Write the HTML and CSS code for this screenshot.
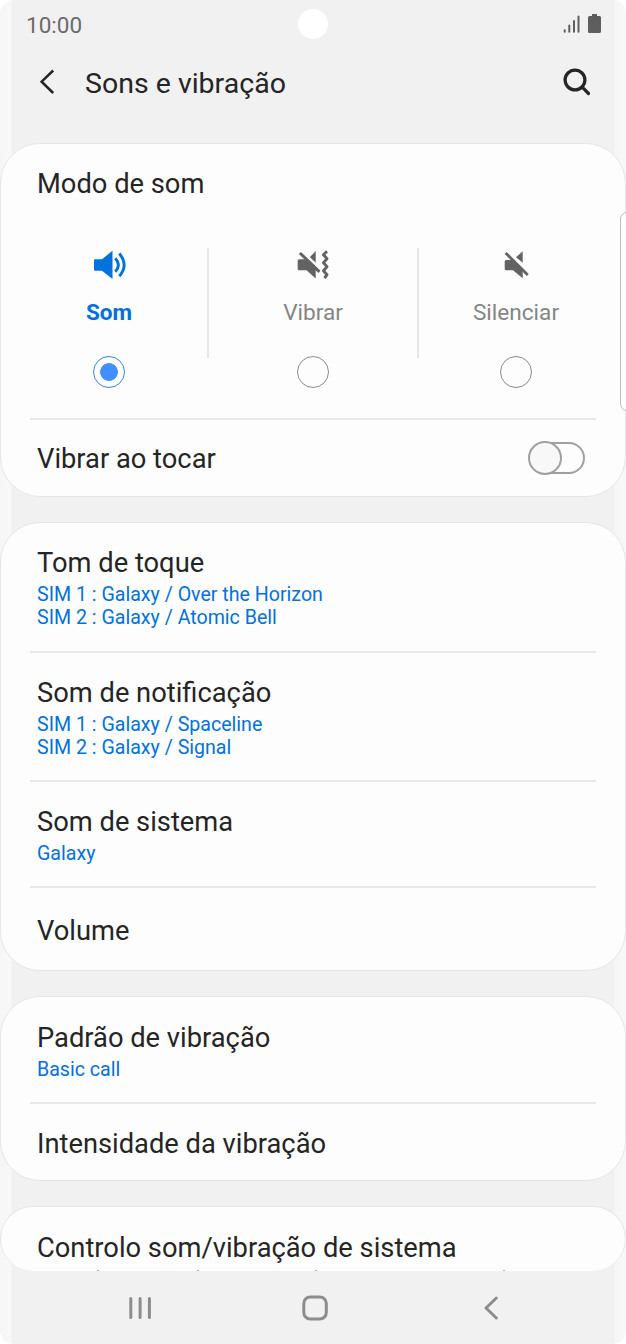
FILE: index.html
```html
<!DOCTYPE html>
<html lang="pt">
<head>
  <meta charset="utf-8">
  <title>Sons e vibração</title>
  <link rel="stylesheet" href="styles.css">
</head>
<body>
<div class="phone">
  <div class="status-bar">
    <span class="time">10:00</span>
    <span class="camera"></span>
    <svg class="status-icons" width="38" height="20" viewBox="0 0 38 20">
      <g stroke="#5e5e5e" stroke-width="2" stroke-linecap="round">
        <path d="M1.700 16.300v1.400M6.300 11.500v6.200M11 7v10.700M15.500 2.600v15.100"/>
      </g>
      <path d="M29 0h5v2h2.500q1.500 0 1.500 1.500v14q0 1.500-1.500 1.500h-10q-1.500 0-1.500-1.500v-14q0-1.500 1.500-1.500h2.500z" fill="#5e5e5e"/>
    </svg>
  </div>

  <div class="header">
    <svg class="back" width="16" height="26" viewBox="0 0 16 26" fill="none" stroke="#252525" stroke-width="2.500"><path d="M14.200 1.500L2.600 12.700L14.200 24"/></svg>
    <h1>Sons e vibração</h1>
    <svg width="28" height="28" viewBox="0 0 28 28" fill="none" stroke="#252525" stroke-width="3.200" stroke-linecap="round"><circle cx="12" cy="12" r="9.900"/><path d="M19.200 19.200L25.500 25.500"/></svg>
  </div>

  <div class="content">
    <section class="card card-sound">
      <h2>Modo de som</h2>
      <div class="modes">
        <div class="mode active">
          <svg width="34" height="30" viewBox="0 0 34 30" fill="#0072de"><path d="M3 9.300H10L20.500 0.700V29L10 20.700H3Q2 20.700 2 19.700V10.300Q2 9.300 3 9.300Z"/><path d="M23.300 8.300Q29.500 15 23.300 21.700M27.300 3.500Q37 15 27.300 26.200" fill="none" stroke="#0072de" stroke-width="2.900"/></svg>
          <span class="label">Som</span>
          <span class="radio"></span>
        </div>
        <div class="mode">
          <svg width="34" height="30" viewBox="0 0 34 30" fill="#636363"><path d="M13.800 7.300L19.700 1V12.500ZM3.200 9.300H9L19.700 19V28.500L10.500 20.300H3.200Q1.700 20.300 1.700 18.800V10.800Q1.700 9.300 3.200 9.300Z"/><path d="M3.900 3L23.500 21.900" fill="none" stroke="#636363" stroke-width="3"/><path d="M31 1.500L27.500 5L31 9L27.500 13L31 17L27.500 21L31 25L28.500 28.500" transform="translate(0 -.3)" fill="none" stroke="#636363" stroke-width="2.900" stroke-linejoin="round"/></svg>
          <span class="label">Vibrar</span>
          <span class="radio"></span>
        </div>
        <div class="mode">
          <svg width="26" height="30" viewBox="0 0 26 30" fill="#636363"><path d="M13 7.300L19.700 1.200V12.700ZM3.200 10H9L19.700 20V28.300L10 20.300H3.200Q1.700 20.300 1.700 18.800V11.500Q1.700 10 3.200 10Z"/><path d="M2.600 2.900L24.800 25" fill="none" stroke="#636363" stroke-width="2.800"/></svg>
          <span class="label">Silenciar</span>
          <span class="radio"></span>
        </div>
      </div>
      <div class="row-switch">
        <h2>Vibrar ao tocar</h2>
        <span class="switch"><span class="thumb"></span></span>
      </div>
    </section>

    <section class="card card-tones">
      <div class="row">
        <h2>Tom de toque</h2>
        <p>SIM 1 : Galaxy / Over the Horizon<br>SIM 2 : Galaxy / Atomic Bell</p>
      </div>
      <div class="row">
        <h2>Som de notificação</h2>
        <p>SIM 1 : Galaxy / Spaceline<br>SIM 2 : Galaxy / Signal</p>
      </div>
      <div class="row">
        <h2>Som de sistema</h2>
        <p>Galaxy</p>
      </div>
      <div class="row row-single">
        <h2>Volume</h2>
      </div>
    </section>

    <section class="card card-vibration">
      <div class="row">
        <h2>Padrão de vibração</h2>
        <p>Basic call</p>
      </div>
      <div class="row row-single">
        <h2>Intensidade da vibração</h2>
      </div>
    </section>

    <section class="card card-system">
      <h2>Controlo som/vibração de sistema</h2>
      <!-- tops of the line that scrolls under the nav bar -->
      <svg class="cut-line" width="626" height="1" viewBox="0 0 626 1" fill="#b0b0b0"><path d="M97 0h2v1h-2zM197 0h2v1h-2zM315 0h2v1h-2zM503 0h2v1h-2z"/></svg>
    </section>
  </div>

  <div class="nav-bar">
    <svg width="24" height="24" viewBox="0 0 24 24" stroke="#8c8c8c" stroke-width="3" stroke-linecap="round"><path d="M2.800 2.500v19M12.100 2.500v19M21.400 2.500v19"/></svg>
    <svg class="home" width="26" height="26" viewBox="0 0 26 26" fill="none" stroke="#8c8c8c" stroke-width="3"><rect x="1.800" y="2" width="22.500" height="22" rx="6.500"/></svg>
    <svg width="16" height="26" viewBox="0 0 16 26" fill="none" stroke="#8c8c8c" stroke-width="3" stroke-linecap="round" stroke-linejoin="round"><path d="M13.300 3L3 13L13.300 23"/></svg>
  </div>

  <div class="edge-handle"></div>
</div>
</body>
</html>
```
FILE: styles.css
```css
body {
  margin: 0;
  background: #fff;
  font-family: Roboto, sans-serif;
  color: #252525;
}
.phone {
  position: relative;
  width: 626px;
  height: 1344px;
  overflow: hidden;
  border-radius: 14px;
  background: linear-gradient(to right, #f6f6f6 0, #f8f8f8 11px, #f1f1f1 12px, #f1f1f1 614px, #f6f6f6 615px, #f8f8f8 100%);
}
h1, h2, p {
  margin: 0;
  font-weight: 400;
}
h1 {
  flex: 1;
  padding-top: 3px;
  font-size: 28.5px;
  line-height: 34px;
}
h2 {
  font-size: 27.3px;
  line-height: 32px;
}
p {
  margin-top: 4px;
  font-size: 19.6px;
  line-height: 23px;
  color: #0072de;
}
svg {
  display: block;
}

.status-bar {
  display: grid;
  grid-template-columns: 1fr 30px 1fr;
  align-items: center;
  height: 48px;
  padding: 0 25px 0 26px;
}
.time {
  padding-top: 2px;
  font-size: 22.5px;
  color: #6b6b6b;
}
.camera {
  width: 30px;
  height: 30px;
  margin-left: -1px;
  border-radius: 50%;
  background: #fff;
}
.status-icons {
  justify-self: end;
}
.header {
  display: flex;
  align-items: center;
  height: 68px;
  margin-bottom: 27px;
  padding: 0 35px 0 39px;
}
.back {
  margin-right: 30px;
}

.card {
  box-sizing: border-box;
  margin-bottom: 25px;
  padding: 0 30px;
  border: 1px solid #e6e6e6;
  border-radius: 40px;
  background: #fdfdfd;
}
.card > h2 {
  padding: 24px 6px 0;
}
.card-sound {
  height: 354px;
}
.modes {
  display: grid;
  grid-template-columns: 196px 210px 196px;
  height: 110px;
  margin: 48px -20px 60px;
}
.mode {
  display: flex;
  flex-direction: column;
  align-items: center;
  height: 140px;
  color: #858585;
}
.mode + .mode {
  padding-left: 2px;
  background: linear-gradient(#e6e6e6, #e6e6e6) left top / 2px 110px no-repeat;
}
.mode svg {
  margin-top: 2px;
}
.label {
  margin-top: 19px;
  font-size: 22.6px;
  line-height: 28px;
}
.radio {
  box-sizing: border-box;
  width: 32px;
  height: 32px;
  margin-top: 29px;
  border: 1px solid #8c8c8c;
  border-radius: 50%;
}
.active .label {
  color: #0072de;
  font-weight: 700;
}
.active .radio {
  border-color: #3c82ea;
  background: radial-gradient(circle, #4090ff 8.5px, transparent 9.2px);
}

.row,
.row-switch {
  box-sizing: border-box;
  margin-right: -1px;
  margin-left: -1px;
}
.row {
  height: 129px;
  padding: 24px 7px 0;
}
.row:first-child {
  height: 128px;
}
.row:nth-child(3) {
  height: 106px;
}
.row + .row,
.row-switch {
  border-top: 2px solid #e8e8e8;
}
.row-switch {
  display: flex;
  align-items: center;
  justify-content: space-between;
  height: 78px;
  padding: 0 11px 0 7px;
}
.row-switch h2 {
  padding-top: 2px;
}
.switch {
  box-sizing: border-box;
  width: 56px;
  height: 32px;
  border: 2px solid #a0a0a0;
  border-radius: 16px;
}
.thumb {
  display: block;
  box-sizing: border-box;
  width: 34px;
  height: 34px;
  margin: -3px 0 0 -3px;
  border: 2px solid #a0a0a0;
  border-radius: 50%;
  background: #f8f8f8;
}
.card-tones {
  height: 449px;
}
.card-tones .row-single {
  padding-top: 27px;
}
.card-vibration {
  height: 185px;
}
.card-vibration .row:first-child {
  height: 105px;
  padding-top: 25px;
}
.card-system {
  height: 65px;
  margin-bottom: 0;
  border-bottom: 0;
}
.card-system h2 {
  padding-top: 25px;
}
.cut-line {
  margin: 6px 0 0 -31px;
}

.nav-bar {
  display: flex;
  align-items: center;
  justify-content: space-between;
  height: 74px;
  padding: 0 127px 0 128px;
}
.home {
  margin: 0 3px 0 -3px;
}

/* edge panel handle, lies over the cards */
.edge-handle {
  position: absolute;
  top: 212px;
  left: 620px;
  box-sizing: border-box;
  width: 14px;
  height: 199px;
  border: 1px solid #bdbdbd;
  border-radius: 7px;
  background: #fdfdfd;
}
```
